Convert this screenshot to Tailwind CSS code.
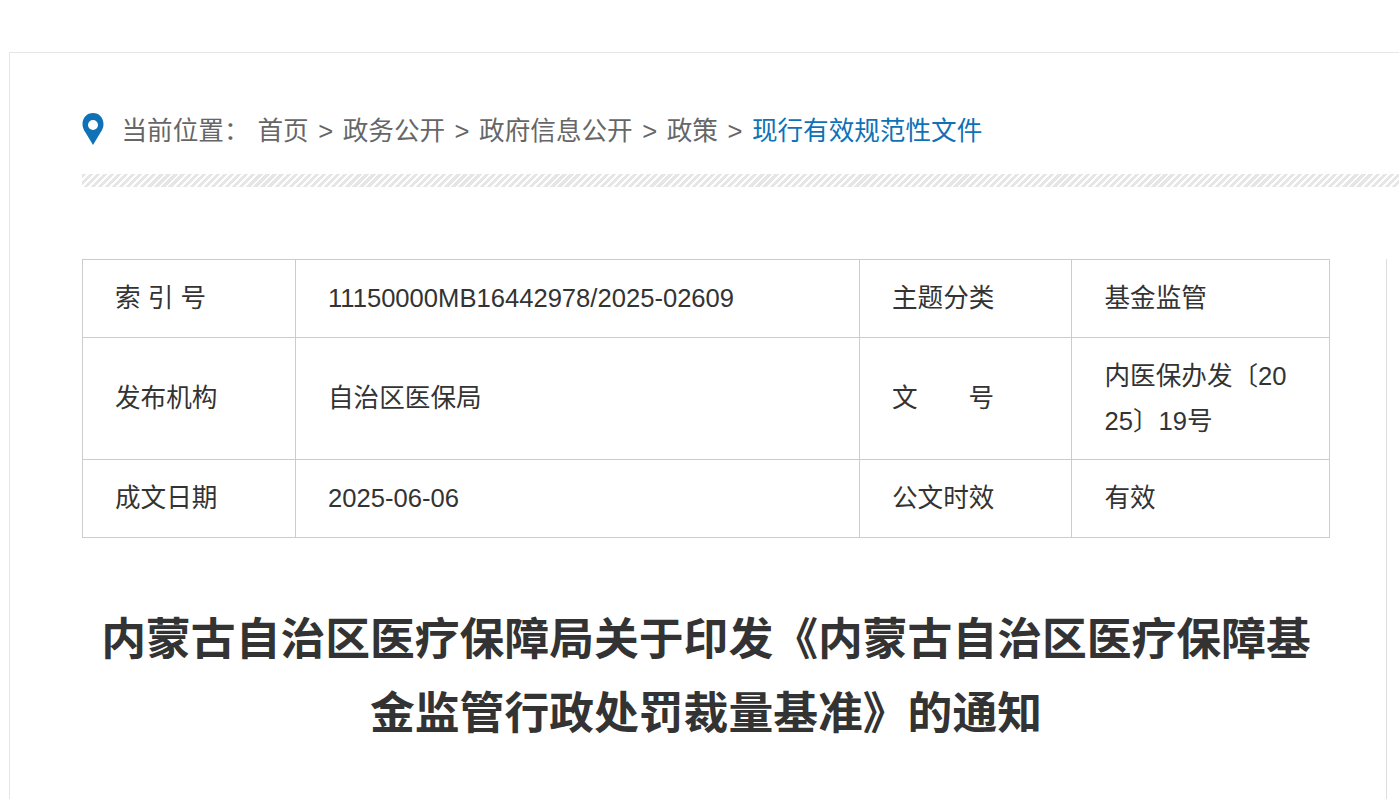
<!DOCTYPE html>
<html lang="zh-CN">
<head>
  <meta charset="UTF-8" />
  <title>内蒙古自治区医疗保障局</title>
  <script src="https://cdn.jsdelivr.net/npm/@tailwindcss/browser@4"></script>
</head>
<body class="bg-white h-[799px] overflow-hidden font-['Liberation_Sans','Noto_Sans_CJK_SC',sans-serif]">
  <div class="pt-[52px] pl-[9px] h-[799px] overflow-hidden">
    <div class="w-[1500px] h-[747px] border-t border-l border-[#e6e6e6] pl-[72px] pt-[59px]">
      <!-- breadcrumb -->
      <div class="flex items-center h-[38px] text-[25.6px] text-[#666]">
        <svg class="w-[22px] h-[32px] mr-[17.5px] -mt-[4px]" viewBox="0 0 22 32">
          <path fill="#0f71b6" fill-rule="evenodd" d="M11 0C4.900 0 .5 4.900.5 11c0 3.400 1.300 6 3 8.600L11 32l7.500-12.400c1.700-2.600 3-5.200 3-8.600C21.500 4.900 17.100 0 11 0zm0 7a5 5 0 1 1 0 10 5 5 0 0 1 0-10z" />
        </svg>
        <span class="w-[136px]">当前位置：</span>
        <span>首页</span><span class="w-[34px] text-center">&gt;</span>
        <span>政务公开</span><span class="w-[34px] text-center">&gt;</span>
        <span>政府信息公开</span><span class="w-[34px] text-center">&gt;</span>
        <span>政策</span><span class="w-[34px] text-center">&gt;</span>
        <span class="text-[#0f71b6]">现行有效规范性文件</span>
      </div>
      <div class="mt-[24px] h-[13px] w-[1400px] bg-[repeating-linear-gradient(135deg,#e6e6e6_0,#e6e6e6_3px,#fff_3px,#fff_5px)]"></div>

      <div class="flex mt-[72px]">
        <div class="w-[1248px]">
          <table class="w-[1247px] table-fixed border-collapse text-[25.6px] text-[#333] leading-[44.8px]">
            <colgroup>
              <col class="w-[213px]" />
              <col class="w-[564px]" />
              <col class="w-[212px]" />
              <col class="w-[258px]" />
            </colgroup>
            <tbody>
              <tr>
                <td class="border border-[#ccc] px-8 py-4">索 引 号</td>
                <td class="border border-[#ccc] px-8 py-4">11150000MB16442978/2025-02609</td>
                <td class="border border-[#ccc] px-8 py-4">主题分类</td>
                <td class="border border-[#ccc] pl-[32.5px] pr-8 py-4">基金监管</td>
              </tr>
              <tr>
                <td class="border border-[#ccc] px-8 py-4">发布机构</td>
                <td class="border border-[#ccc] px-8 py-4">自治区医保局</td>
                <td class="border border-[#ccc] px-8 py-4">文<span class="inline-block w-[51px]"></span>号</td>
                <td class="border border-[#ccc] pl-[32.5px] pr-8 py-4 break-all">内医保办发〔2025〕19号</td>
              </tr>
              <tr>
                <td class="border border-[#ccc] px-8 py-4">成文日期</td>
                <td class="border border-[#ccc] px-8 py-4">2025-06-06</td>
                <td class="border border-[#ccc] px-8 py-4">公文时效</td>
                <td class="border border-[#ccc] pl-[32.5px] pr-8 py-4">有效</td>
              </tr>
            </tbody>
          </table>
          <h1 class="mt-[64px] text-center text-[44.8px] leading-[74px] font-bold text-[#333]">内蒙古自治区医疗保障局关于印发《内蒙古自治区医疗保障基金监管行政处罚裁量基准》的通知</h1>
        </div>
        <div class="ml-[56px] w-[100px] h-[600px] border-l border-[#ddd]"></div>
      </div>
    </div>
  </div>
</body>
</html>
